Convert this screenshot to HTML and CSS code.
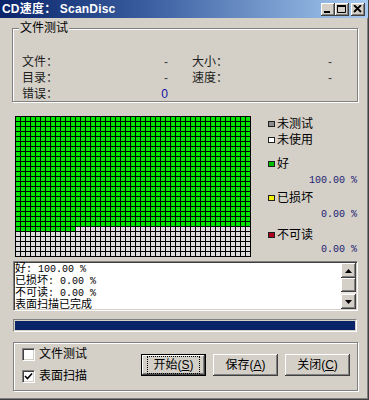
FILE: index.html
```html
<!DOCTYPE html>
<html lang="zh-CN">
<head>
<meta charset="utf-8">
<title>CD速度： ScanDisc</title>
<link rel="stylesheet" href="styles.css">
</head>
<body>
<div class="window">
  <div class="titlebar">
    <span class="title">CD速度： ScanDisc</span>
    <div class="ctrls">
      <span class="cbtn"><svg width="10" height="8" viewBox="0 0 10 8"><rect x="1" y="6" width="6" height="2" fill="#000"/></svg></span>
      <span class="cbtn"><svg width="10" height="8" viewBox="0 0 10 8"><path d="M0.5 0.5h8v7h-8z" fill="none" stroke="#000"/><rect x="0" y="0" width="9" height="2" fill="#000"/></svg></span>
      <span class="cbtn close"><svg width="10" height="8" viewBox="0 0 10 8"><path d="M1 0L8 7M8 0L1 7" stroke="#000" stroke-width="1.8"/></svg></span>
    </div>
  </div>

  <fieldset class="group g1">
    <legend>文件测试</legend>
    <div class="stats">
      <div class="stat"><span>文件：</span><span class="val">-</span></div>
      <div class="stat"><span>大小：</span><span class="val">-</span></div>
      <div class="stat"><span>目录：</span><span class="val">-</span></div>
      <div class="stat"><span>速度：</span><span class="val">-</span></div>
      <div class="stat"><span>错误：</span><span class="val blue">0</span></div>
    </div>
  </fieldset>

  <div class="maprow">
    <div class="map">
      <div class="cells green full"></div>
      <div class="partial"><div class="cells green pg"></div><div class="cells gray pr"></div></div>
      <div class="cells gray rest"></div>
    </div>
    <div class="legend">
      <div class="item"><i class="sw sw-untested"></i>未测试</div>
      <div class="item"><i class="sw sw-unused"></i>未使用</div>
      <div class="item gap"><i class="sw sw-good"></i>好</div>
      <div class="pct">100.00 %</div>
      <div class="item"><i class="sw sw-bad"></i>已损坏</div>
      <div class="pct">0.00 %</div>
      <div class="item gap2"><i class="sw sw-unread"></i>不可读</div>
      <div class="pct last">0.00 %</div>
    </div>
  </div>

  <div class="log">
    <div class="logtext">
      <div class="line">好<span class="mono">: 100.00 %</span></div>
      <div class="line">已损坏<span class="mono">: 0.00 %</span></div>
      <div class="line">不可读<span class="mono">: 0.00 %</span></div>
      <div class="line">表面扫描已完成</div>
    </div>
    <div class="scrollbar">
      <span class="sbtn"><svg width="7" height="4" viewBox="0 0 7 4"><path d="M3.5 0L7 4H0z" fill="#000"/></svg></span>
      <span class="thumb"></span>
      <span class="track"></span>
      <span class="sbtn"><svg width="7" height="4" viewBox="0 0 7 4"><path d="M0 0H7L3.5 4z" fill="#000"/></svg></span>
    </div>
  </div>

  <div class="progress"><div class="bar"></div></div>

  <fieldset class="group g2">
    <div class="checks">
      <label class="chk"><span class="box"></span>文件测试</label>
      <label class="chk"><span class="box"><svg width="9" height="9" viewBox="0 0 9 9"><path d="M1 4l2.5 2.5L8 1.5" fill="none" stroke="#000" stroke-width="1.6"/></svg></span>表面扫描</label>
    </div>
    <div class="buttons">
      <button class="btn default"><span class="focus">开始(<u>S</u>)</span></button>
      <button class="btn"><span>保存(<u>A</u>)</span></button>
      <button class="btn"><span>关闭(<u>C</u>)</span></button>
    </div>
  </fieldset>
</div>
</body>
</html>
```
FILE: styles.css
```css
* { box-sizing: border-box; }

html, body {
  margin: 0;
  padding: 0;
}

body {
  width: 369px;
  height: 400px;
  overflow: hidden;
  background: #d4d0c8;
  font-family: "Liberation Sans", "Noto Sans CJK SC", sans-serif;
  font-size: 12px;
  line-height: 14px;
  color: #000;
}

.window {
  width: 369px;
  height: 400px;
  display: flex;
  flex-direction: column;
  border-right: 1px solid #404040;
  border-bottom: 1px solid #404040;
  box-shadow: inset -1px -1px 0 #808080;
}

/* title bar */
.titlebar {
  height: 18px;
  flex: none;
  display: flex;
  align-items: center;
  justify-content: space-between;
  padding: 0 3px 0 2px;
  background: linear-gradient(90deg, #0a246a 0%, #3a5ea0 40%, #a6caf0 100%);
}

.title {
  color: #fff;
  font-weight: bold;
  font-size: 12px;
  line-height: 14px;
  letter-spacing: 0.2px;
}

.ctrls {
  display: flex;
  align-items: center;
}

.cbtn {
  width: 14px;
  height: 13px;
  display: flex;
  align-items: center;
  justify-content: center;
  background: #d4d0c8;
  box-shadow: inset -1px -1px 0 #404040, inset 1px 1px 0 #fff, inset -2px -2px 0 #808080;
}

.cbtn.close { margin-left: 2px; }

/* group boxes */
.group {
  margin: 0;
  border: 1px solid #808080;
  box-shadow: 1px 1px 0 #fff, inset 1px 1px 0 #fff;
  min-width: 0;
}

.group legend {
  margin-left: -3px;
  padding: 0 1px;
  background: #d4d0c8;
  line-height: 14px;
}

.g1 {
  margin: 3px 0 0 12px;
  width: 346px;
  padding: 19px 0 0 9px;
}

.stats {
  display: grid;
  grid-template-columns: 146px 140px;
  grid-template-rows: 16px 16px 15px;
  column-gap: 24px;
}

.stat {
  display: flex;
  justify-content: space-between;
  align-items: center;
  color: #202020;
}

.val { color: #404040; }
.val.blue { color: #1010a0; }

/* block map */
.maprow {
  display: flex;
  margin-top: 14px;
  flex: none;
}

.map {
  margin-left: 15px;
  width: 236px;
  border-right: 1px solid #000;
  border-bottom: 1px solid #000;
  flex: none;
}

.cells {
  background-image:
    linear-gradient(90deg, #000 1px, transparent 1px),
    linear-gradient(#000 1px, transparent 1px);
  background-size: 5px 5px;
}

.green { background-color: #00e400; }
.gray { background-color: #dcdcdc; }

.full { height: 110px; }
.partial { display: flex; height: 5px; }
.pg { width: 60px; }
.pr { width: 175px; }
.rest { height: 25px; }

.legend {
  flex: 1;
  padding: 0 11px 0 17px;
  display: flex;
  flex-direction: column;
}

.item {
  display: flex;
  align-items: center;
  height: 16px;
}

.item.gap { margin-top: 8px; }
.item.gap2 { margin-top: 3px; }

.sw {
  width: 7px;
  height: 6px;
  margin-right: 2px;
  border: 1px solid #202020;
  flex: none;
}

.sw-untested { background: #8c8c8c; }
.sw-unused { background: #fff; }
.sw-good { background: #00c000; }
.sw-bad { background: #f0f000; }
.sw-unread { background: #b00020; }

.pct {
  height: 18px;
  line-height: 18px;
  text-align: right;
  font-family: "Liberation Mono", monospace;
  font-size: 10px;
  color: #202070;
}

.pct.last { height: 14px; line-height: 14px; }

/* log */
.log {
  margin: 4px 0 0 13px;
  width: 345px;
  height: 50px;
  flex: none;
  display: flex;
  background: #fff;
  border-top: 1px solid #808080;
  border-left: 1px solid #808080;
  border-right: 1px solid #fff;
  border-bottom: 1px solid #fff;
  box-shadow: inset 1px 1px 0 #404040, inset -1px -1px 0 #d4d0c8;
  padding: 0 1px;
  overflow: hidden;
}

.logtext {
  flex: 1;
  overflow: hidden;
  font-size: 11px;
}

.line {
  height: 12px;
  line-height: 12px;
  white-space: nowrap;
  overflow: hidden;
}

.mono {
  font-family: "Liberation Mono", monospace;
  font-size: 10px;
  line-height: 10px;
}

.scrollbar {
  width: 15px;
  margin: 1px 0;
  display: flex;
  flex-direction: column;
  background-color: #ece9e4;
}

.sbtn, .thumb {
  flex: none;
  height: 15px;
  display: flex;
  align-items: center;
  justify-content: center;
  background: #d4d0c8;
  box-shadow: inset -1px -1px 0 #404040, inset 1px 1px 0 #fff, inset -2px -2px 0 #808080;
}

.thumb { height: 14px; }
.track { flex: 1; }

/* progress */
.progress {
  margin: 8px 0 0 13px;
  width: 344px;
  height: 13px;
  flex: none;
  border-top: 1px solid #808080;
  border-left: 1px solid #808080;
  border-right: 1px solid #fff;
  border-bottom: 1px solid #fff;
  padding: 1px;
}

.bar {
  height: 100%;
  background: #0a246a;
}

/* bottom group */
.g2 {
  margin: 10px 0 0 13px;
  width: 345px;
  height: 49px;
  padding: 0 7px 0 8px;
  display: flex;
  align-items: center;
}

.checks {
  display: flex;
  flex-direction: column;
}

.chk {
  display: flex;
  align-items: center;
  height: 22px;
  gap: 4px;
}

.box {
  width: 13px;
  height: 13px;
  display: flex;
  align-items: center;
  justify-content: center;
  background: #fff;
  border-top: 1px solid #808080;
  border-left: 1px solid #808080;
  border-right: 1px solid #fff;
  border-bottom: 1px solid #fff;
  box-shadow: inset 1px 1px 0 #404040, inset -1px -1px 0 #d4d0c8;
}

.buttons {
  margin-left: auto;
  display: flex;
  gap: 7px;
}

.btn {
  width: 65px;
  height: 22px;
  padding: 0;
  margin: 0;
  border: none;
  background: #d4d0c8;
  font: inherit;
  color: #000;
  display: flex;
  align-items: center;
  justify-content: center;
  box-shadow: inset -1px -1px 0 #404040, inset 1px 1px 0 #fff, inset -2px -2px 0 #808080;
}

.btn.default {
  border: 1px solid #000;
}

.btn u { text-decoration-thickness: 1px; text-underline-offset: 1px; }

.focus {
  outline: 1px dotted #000;
  outline-offset: 1px;
  padding: 0 4px;
}
```
